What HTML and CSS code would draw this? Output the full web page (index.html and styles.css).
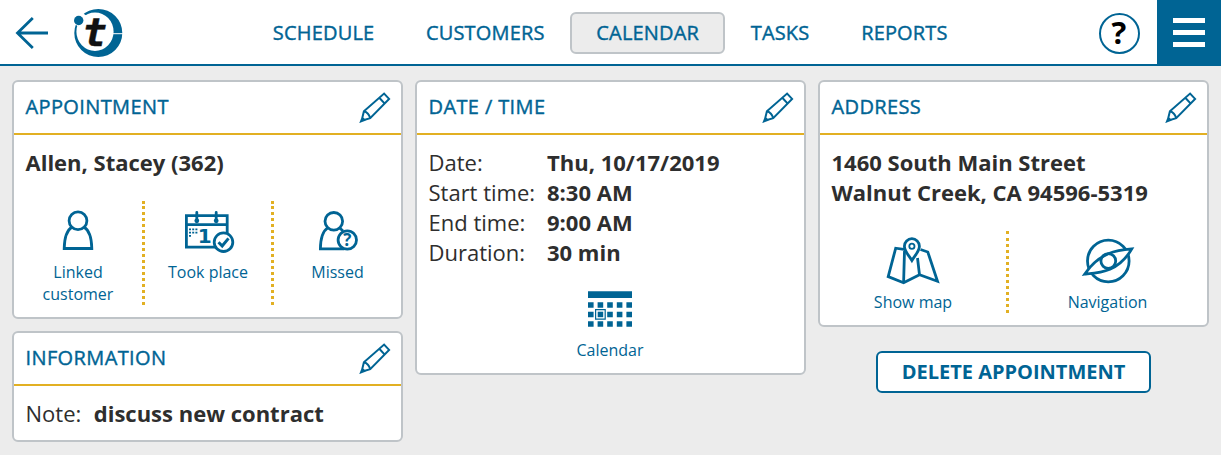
FILE: index.html
```html
<!DOCTYPE html>
<html lang="en">
<head>
<meta charset="utf-8">
<title>Appointment</title>
<link rel="stylesheet" href="styles.css">
</head>
<body>
<svg class="defs" width="0" height="0" aria-hidden="true">
  <symbol id="pencil" viewBox="0 0 32 32">
    <path d="M2.6 29.8 4.9 20.2 25.1 2.6 30.1 7.9 11.2 27.2ZM4.9 20.2Q9.8 21.6 11.2 27.2M20.3 6.8 25.5 12.4M2 30.4 5.4 29 3.4 26.8Z"/>
  </symbol>
</svg>
<header class="topbar">
  <div class="brand">
    <svg class="back line" width="36" height="36" viewBox="0 0 36 36"><path d="M34 18H3.5M18.8 3 3.5 18 18.8 33"/></svg>
    <svg class="logo" width="50" height="50" viewBox="0 0 50 50">
      <path class="fill" fill-rule="evenodd" d="M25.3 1a24 24 0 1 1 0 48a24 24 0 1 1 0-48ZM22 4.5a18.6 19.2 0 1 0 0 38.4a18.6 19.2 0 1 0 0-38.4Z"/>
      <path class="gap" d="M39 25.7H50" />
      <path class="cut" d="M3 17 11 6"/>
      <circle class="fill" cx="5.7" cy="12.5" r="4.7"/>
      <text class="mark" transform="translate(9.4 37.6) scale(1.04 1)">t</text>
    </svg>
  </div>
  <nav class="nav">
    <a class="tab">SCHEDULE</a><a class="tab">CUSTOMERS</a><a class="tab active">CALENDAR</a><a class="tab">TASKS</a><a class="tab">REPORTS</a>
  </nav>
  <div class="tools">
    <div class="help">?</div>
    <div class="menu"><i></i><i></i><i></i></div>
  </div>
</header>

<main class="board">
  <div class="column">
    <section class="card">
      <div class="head"><h2>APPOINTMENT</h2><svg class="pencil"><use href="#pencil"/></svg></div>
      <div class="body">
        <p><b>Allen, Stacey (362)</b></p>
        <div class="actions three">
          <a class="action">
            <svg class="line" width="60" height="60" viewBox="0 0 60 60"><circle cx="30" cy="19.7" r="8.9"/><path d="M24 26C18.5 29.5 16.4 36 16.2 47.5H43.8C43.6 36 41.5 29.5 36 26"/></svg>
            <span>Linked<br>customer</span>
          </a>
          <i class="dots"></i>
          <a class="action">
            <svg class="line" width="60" height="60" viewBox="0 0 60 60">
              <path d="M44 46.1H8.4V14.7H49.2V36M8 23.6H50"/>
              <path d="M18.8 11.5V20M38.2 11.5V20" stroke-linecap="round"/>
              <circle class="fill" cx="18.8" cy="19.8" r="2.4"/><circle class="fill" cx="38.2" cy="19.8" r="2.4"/>
              <path class="grid" d="M11 28.4H19.5M11 31.6H19.5M11 34.8H14"/>
              <text class="day" x="19.8" y="42.4">1</text>
              <circle class="badge" cx="45.5" cy="41.2" r="9.3"/>
              <path d="M40.5 41.2 44.2 45 50.5 37.4" stroke-width="3"/>
            </svg>
            <span>Took place</span>
          </a>
          <i class="dots"></i>
          <a class="action">
            <svg class="line" width="60" height="60" viewBox="0 0 60 60">
              <circle cx="25.8" cy="20.3" r="8.8"/><path d="M19.7 26.8C14 30.5 12.5 38 12.4 47.8H36M31.5 26.8 35 30"/>
              <circle class="badge" cx="39.3" cy="39" r="9.2"/>
              <text class="query" x="35.3" y="45.2">?</text>
            </svg>
            <span>Missed</span>
          </a>
        </div>
      </div>
    </section>
    <section class="card">
      <div class="head"><h2>INFORMATION</h2><svg class="pencil"><use href="#pencil"/></svg></div>
      <div class="body note"><p><span class="note-label">Note:</span><b>discuss new contract</b></p></div>
    </section>
  </div>

  <div class="column">
    <section class="card">
      <div class="head"><h2>DATE / TIME</h2><svg class="pencil"><use href="#pencil"/></svg></div>
      <div class="body">
        <dl class="facts">
          <dt>Date:</dt><dd>Thu, 10/17/2019</dd>
          <dt>Start time:</dt><dd>8:30 AM</dd>
          <dt>End time:</dt><dd>9:00 AM</dd>
          <dt>Duration:</dt><dd>30 min</dd>
        </dl>
        <div class="actions single">
          <a class="action">
            <svg width="60" height="60" viewBox="0 0 60 60">
              <path class="fill" d="M8 12.2H52V19H8z"/>
              <path class="cells" d="M8 26H52M8 35.5H52M8 45H52"/>
              <path class="pick" d="M15.6 30.6H25.2V40.2H15.6z"/>
              <path class="fill" d="M17.7 32.7h5.5v5.5h-5.5z"/>
            </svg>
            <span>Calendar</span>
          </a>
        </div>
      </div>
    </section>
  </div>

  <div class="column">
    <section class="card">
      <div class="head"><h2>ADDRESS</h2><svg class="pencil"><use href="#pencil"/></svg></div>
      <div class="body">
        <p><b>1460 South Main Street<br>Walnut Creek, CA 94596-5319</b></p>
        <div class="actions two">
          <a class="action">
            <svg class="line" width="60" height="60" viewBox="0 0 60 60">
              <path d="M24.5 18.8 12.7 17.2 5.2 45.6 20.6 51.7 36.5 43.8 54.5 50.2 44.8 21 37.5 18.5M21.5 20 20.6 51.7M34.5 27 36.5 43.8"/>
              <path class="badge" d="M28.9 29.5C26 24.5 21.4 20.3 21.4 15.2a7.5 7.5 0 0 1 15 0C36.4 20.3 31.8 24.5 28.9 29.5Z"/>
              <circle cx="28.9" cy="15.3" r="2.6" stroke-width="1.8"/>
            </svg>
            <span>Show map</span>
          </a>
          <i class="dots"></i>
          <a class="action">
            <svg class="line" width="60" height="60" viewBox="0 0 60 60">
              <circle cx="30.3" cy="30" r="20.8"/>
              <path class="badge" d="M53.8 17.9C39 19 21.5 21.5 6.6 43.2 21 41.8 40 41.5 53.8 17.9Z"/>
              <circle cx="30.3" cy="30" r="7.4"/>
            </svg>
            <span>Navigation</span>
          </a>
        </div>
      </div>
    </section>
    <button class="delete">DELETE APPOINTMENT</button>
  </div>
</main>
</body>
</html>
```
FILE: styles.css
```css
:root { --blue: #006494; --gold: #e2b023; --edge: #bfc4c8; --gray: #ececec; }
* { box-sizing: border-box; }
body { margin: 0; height: 455px; overflow: hidden; background: var(--gray); color: #2e2e2e; font: 22px/30px "Open Sans", sans-serif; }
.defs { position: absolute; }
svg { display: block; }
p, h2, dl, dd { margin: 0; }
b, dd { font-weight: 700; }

.topbar { height: 66px; display: flex; background: #fff; border-bottom: 2px solid var(--blue); }
.brand { width: 247px; display: flex; align-items: center; padding: 2px 0 0 14px; gap: 23px; }
.nav { display: flex; align-items: center; padding-top: 2px; flex: 1; }
.tab { height: 42px; padding: 0 23.85px; border: 2px solid transparent; border-radius: 6px; color: var(--blue); font-size: 20px; line-height: 38px; letter-spacing: .17px; -webkit-text-stroke: .4px; }
.tab.active { background: var(--gray); border-color: var(--edge); }
.tools { display: flex; align-items: center; gap: 17.5px; }
.help { width: 41px; height: 41px; margin-top: 2px; border: 2.5px solid var(--blue); border-radius: 50%; color: #000; font-size: 31px; font-weight: 700; line-height: 35px; text-align: center; }
.menu { width: 64px; height: 66px; align-self: flex-start; background: var(--blue); padding: 18.3px 16px; display: flex; flex-direction: column; gap: 7.7px; }
.menu i { height: 4.3px; background: #fff; }

.line { fill: none; stroke: var(--blue); stroke-width: 2.8; }
.fill { fill: var(--blue); stroke: none; }
.gap { stroke: #fff; stroke-width: 1; }
.cut { stroke: #fff; stroke-width: 8; }
.mark { font: italic 700 39px "DejaVu Sans Mono", monospace; fill: #111; stroke: #111; stroke-width: .4; }
.badge { fill: #fff; }
.grid { stroke-width: 1.8; stroke-dasharray: 2 1.2; }
.day { font: 700 20px "DejaVu Sans", sans-serif; fill: var(--blue); stroke: none; }
.query { font: 700 17px "Open Sans", sans-serif; fill: var(--blue); stroke: none; }
.cells { fill: none; stroke: var(--blue); stroke-width: 5.6; stroke-dasharray: 5.6 4; }
.pick { fill: #fff; stroke: var(--blue); stroke-width: 1.2; }

.board { display: grid; grid-template-columns: repeat(3, 391px); gap: 12px; padding: 14px 12px; }
.column { display: flex; flex-direction: column; gap: 12px; }
.card { background: #fff; border: 2px solid var(--edge); border-radius: 6px; }
.head { height: 53px; display: flex; justify-content: space-between; padding: 0 10px 0 11.5px; border-bottom: 2px solid var(--gold); }
h2 { color: var(--blue); font-size: 20px; font-weight: 400; line-height: 49px; letter-spacing: .38px; -webkit-text-stroke: .4px; }
.pencil { width: 32px; height: 32px; margin-top: 9px; fill: none; stroke: var(--blue); stroke-width: 2; }
.body { padding: 12px 12px 12px 11.5px; }
.note-label { margin-right: 12.5px; }
.facts { display: grid; grid-template-columns: 118.5px 1fr; }

.actions { display: grid; margin: 24px -12px 0 -11.5px; }
.three { grid-template-columns: 128px 3px 126px 3px 127px; --lead: 5px; }
.two { grid-template-columns: 186px 3px 197px; --lead: 7px; }
.single { grid-template-columns: 386px; margin-top: 12px; }
.action { display: flex; flex-direction: column; align-items: center; color: var(--blue); font-size: 16px; line-height: 22px; text-align: center; }
.dots {
  padding-top: var(--lead);
  background: linear-gradient(var(--gold), var(--gold)) 0 0 / 3px 3px no-repeat border-box,
    repeating-linear-gradient(var(--gold) 0 3px, transparent 3px 6px) content-box;
}
.delete { align-self: center; width: 275px; height: 42px; margin-top: 12px; padding: 0; background: #fff; border: 2px solid var(--blue); border-radius: 6px; color: var(--blue); font: 700 20px/36px "Open Sans", sans-serif; }
```
